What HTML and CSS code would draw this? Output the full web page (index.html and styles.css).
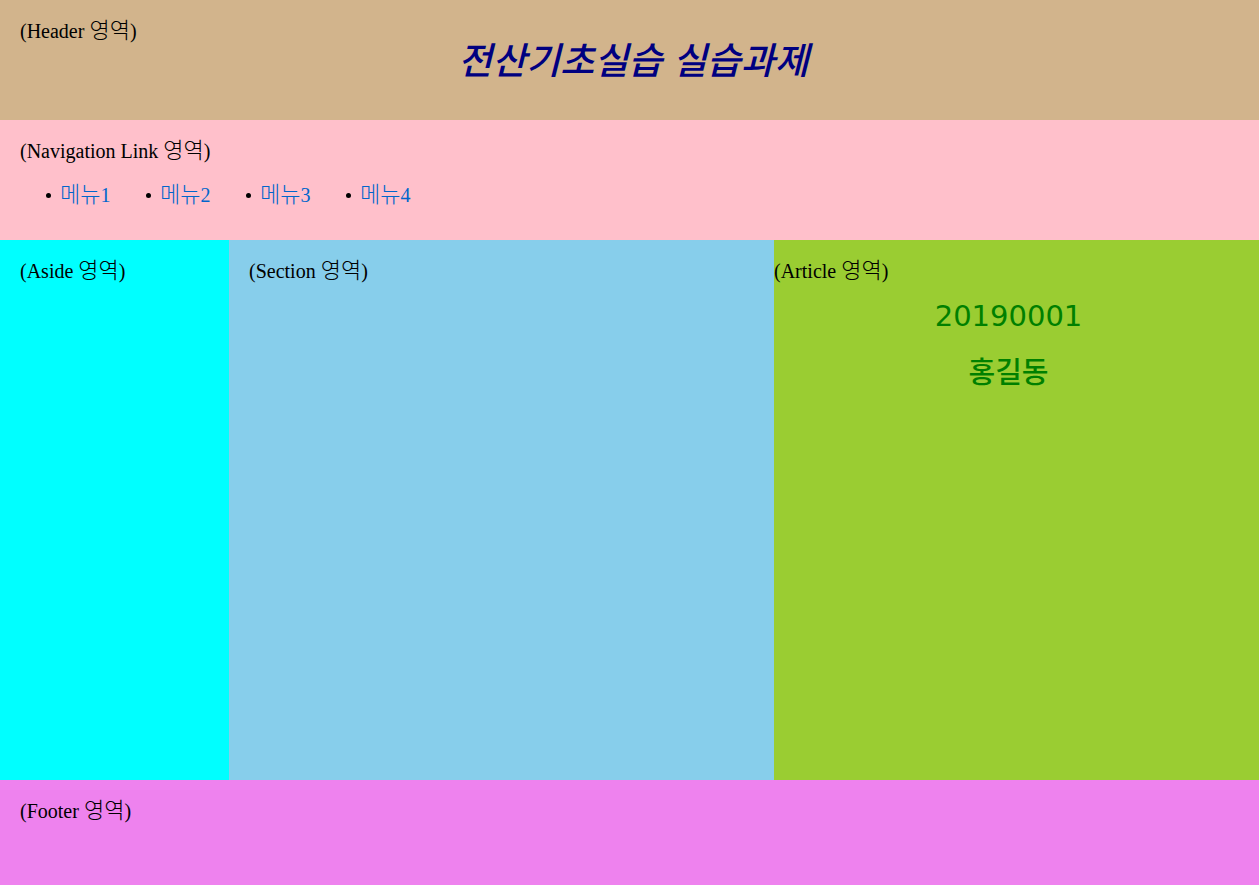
FILE: index.html
```html
<!DOCTYPE html>
<html lang="ko">
<head>
<meta charset="utf-8">
<title>전산기초실습 실습과제</title>
<link rel="stylesheet" href="styles.css">
</head>
<body>
<header class="header">
  <p class="label">(Header <span class="ko">영역</span>)</p>
  <h1 class="title">전산기초실습 실습과제</h1>
</header>
<nav class="nav">
  <p class="label">(Navigation Link <span class="ko">영역</span>)</p>
  <ul class="menu">
    <li><a href="#menu1"><span class="ko">메뉴</span>1</a></li>
    <li><a href="#menu2"><span class="ko">메뉴</span>2</a></li>
    <li><a href="#menu3"><span class="ko">메뉴</span>3</a></li>
    <li><a href="#menu4"><span class="ko">메뉴</span>4</a></li>
  </ul>
</nav>
<main class="columns">
  <aside class="aside"><p class="label">(Aside <span class="ko">영역</span>)</p></aside>
  <section class="section"><p class="label">(Section <span class="ko">영역</span>)</p></section>
  <article class="article">
    <p class="label">(Article <span class="ko">영역</span>)</p>
    <h2 class="student">20190001</h2>
    <h2 class="student">홍길동</h2>
  </article>
</main>
<footer class="footer"><p class="label">(Footer <span class="ko">영역</span>)</p></footer>
</body>
</html>
```
FILE: styles.css
```css
* {
  box-sizing: border-box;
}

body {
  margin: 0;
  font: 300 20px/20px "Liberation Serif", "Noto Sans CJK KR", serif;
  color: black;
}

.label {
  margin: 0;
}

.ko {
  font-size: 22px;
  line-height: 1;
}

.header {
  min-height: 120px;
  padding: 20px;
  background: tan;
}

.title {
  margin: 0;
  padding-left: 8px;
  font: italic 500 37px/32px "Noto Sans CJK KR", sans-serif;
  text-align: center;
  color: navy;
}

.nav {
  min-height: 120px;
  padding: 20px;
  background: pink;
}

.menu {
  display: flex;
  margin: 22px 0 0;
  padding: 0 0 0 26px;
  list-style: none;
}

.menu li {
  display: flex;
  align-items: center;
  gap: 9px;
  width: 100px;
}

.menu li::before {
  content: "";
  width: 5px;
  height: 5px;
  border-radius: 50%;
  background: black;
}

.menu a {
  color: #0066cc;
  text-decoration: none;
}

.columns {
  display: grid;
  grid-template-columns: 229fr 545fr 485fr;
  min-height: 540px;
}

.aside {
  padding: 20px;
  background: cyan;
}

.section {
  padding: 20px;
  background: skyblue;
}

.article {
  padding: 20px 0;
  background: yellowgreen;
}

.student {
  margin: 16px 0 20px;
  padding-right: 16px;
  font: 500 29px/37px "DejaVu Sans", "Noto Sans CJK KR", sans-serif;
  text-align: center;
  color: green;
}

.footer {
  min-height: 105px;
  padding: 20px;
  background: violet;
}
```
